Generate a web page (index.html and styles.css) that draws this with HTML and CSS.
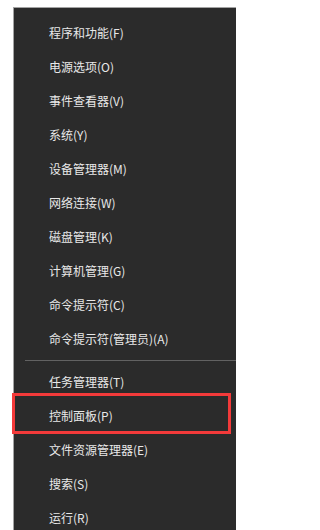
FILE: index.html
```html
<!DOCTYPE html>
<html lang="zh-CN">
<head>
<meta charset="utf-8">
<title>菜单</title>
<link rel="stylesheet" href="styles.css">
</head>
<body>
<div class="panel">
  <ul class="menu">
    <li class="item">程序和功能(F)</li>
    <li class="item">电源选项(O)</li>
    <li class="item">事件查看器(V)</li>
    <li class="item">系统(Y)</li>
    <li class="item">设备管理器(M)</li>
    <li class="item">网络连接(W)</li>
    <li class="item">磁盘管理(K)</li>
    <li class="item">计算机管理(G)</li>
    <li class="item">命令提示符(C)</li>
    <li class="item">命令提示符(管理员)(A)</li>
    <li class="sep"></li>
    <li class="item">任务管理器(T)</li>
    <li class="item">控制面板(P)</li>
    <li class="item">文件资源管理器(E)</li>
    <li class="item">搜索(S)</li>
    <li class="item last">运行(R)</li>
  </ul>
</div>
<div class="highlight"></div>
</body>
</html>
```
FILE: styles.css
```css
html, body {
  margin: 0;
  padding: 0;
  background: #ffffff;
  width: 236px;
  height: 530px;
  overflow: hidden;
}
body {
  position: relative;
  font-family: "Noto Sans CJK SC", "Noto Sans", sans-serif;
}
.panel {
  margin: 7px 0 0 13px;
  background: #2b2b2b;
  border-top: 1px solid #a3a3a3;
  border-left: 1px solid #a3a3a3;
  height: 522px;
  overflow: hidden;
}
.menu {
  list-style: none;
  margin: 0;
  padding: 8px 0 0 0;
}
.item {
  height: 34px;
  line-height: 34px;
  padding-left: 35px;
  font-size: 12px;
  color: #e8e8e8;
  white-space: nowrap;
}
.item.last {
  height: 29px;
  line-height: 34px;
}
.sep {
  height: 9px;
  display: flex;
  align-items: center;
  padding-left: 11px;
}
.sep::before {
  content: "";
  display: block;
  flex: 1;
  height: 1px;
  background: #626262;
}
.highlight {
  position: absolute;
  left: 12px;
  top: 393px;
  width: 213px;
  height: 35px;
  border: 3px solid #f33a3a;
}
```
